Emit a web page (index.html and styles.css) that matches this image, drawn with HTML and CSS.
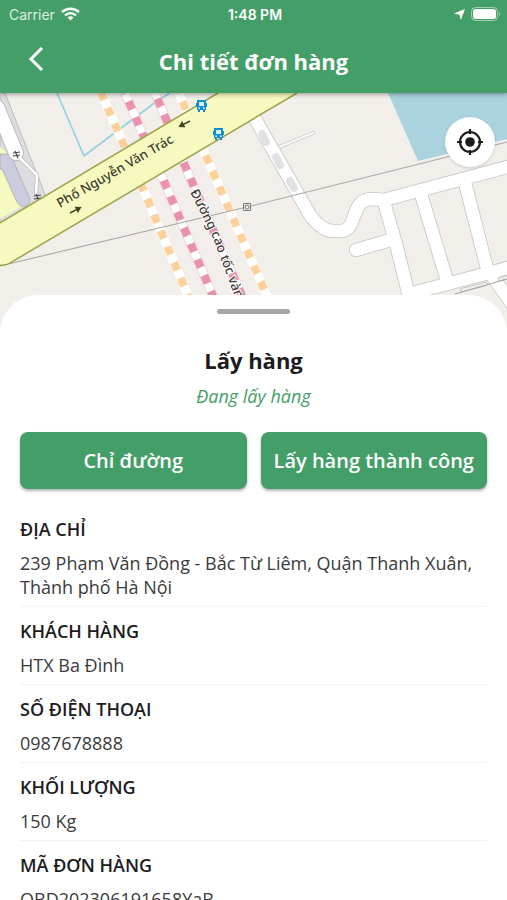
FILE: index.html
```html
<!DOCTYPE html>
<html lang="vi">
<head>
    <meta charset="UTF-8">
    <meta name="viewport" content="width=device-width, initial-scale=1.0">
    <title>Chi tiết đơn hàng</title>
    <link rel="stylesheet" href="styles.css">
</head>
<body>
    <!-- HEADER -->
    <header class="header">
        <div class="status-bar">
            <div class="status-left">
                <span>Carrier</span>
                <svg width="19" height="14" viewBox="0 0 19 14" fill="none" stroke="#fff" stroke-width="2.4">
                    <path d="M1 5.2C6 .6 13 .6 18 5.2"/>
                    <path d="M4 8.4c3.300-3 7.700-3 11 0"/>
                    <path d="M9.500 13.500 6.500 10.500c1.800-1.600 4.200-1.600 6 0z" fill="#fff" stroke="none"/>
                </svg>
            </div>
            <span class="status-time">1:48 PM</span>
            <div class="status-right">
                <svg width="11" height="11" viewBox="0 0 11 11" fill="#fff">
                    <path d="M11 0 6.800 11 5.400 5.800 0 4.600z"/>
                </svg>
                <svg width="30" height="14" viewBox="0 0 30 14">
                    <rect x=".5" y=".5" width="26" height="13" rx="4" fill="none" stroke="#fff" stroke-opacity=".5"/>
                    <rect x="2" y="2" width="23" height="10" rx="2.500" fill="#fff"/>
                    <path d="M28 5c1.600.5 1.600 3.500 0 4z" fill="#fff" fill-opacity=".5"/>
                </svg>
            </div>
        </div>
        <div class="nav-bar">
            <button class="back" type="button" aria-label="Quay lại">
                <svg width="16" height="26" viewBox="0 0 16 26" fill="none" stroke="#fff" stroke-width="3">
                    <path d="M14 2 3 13l11 11"/>
                </svg>
            </button>
            <h1 class="title">Chi tiết đơn hàng</h1>
        </div>
    </header>

    <!-- MAP -->
    <section class="map">
        <svg class="map-canvas" viewBox="0 93 507 240" preserveAspectRatio="xMidYMin slice">
            <defs>
                <g id="bus">
                    <path d="M1 0h9v3h1v4h-1v3H9v2H7v-2H4v2H2v-2H1V7H0V3h1z" fill="#0f8fd0"/>
                    <path d="M3 2h5v4H3z" fill="#d8f0f4"/>
                    <path d="M2.500 7.500h1.500V9H2.500zM7 7.500h1.500V9H7z" fill="#fff"/>
                </g>
                <g id="arrow">
                    <path d="M0 0h9" stroke="#3f4420" stroke-width="1.500"/>
                    <path d="M7-3.500 13 0 7 3.500z" fill="#3f4420"/>
                </g>
                <g id="roads">
                    <path d="m254 117 56 98q12 16 23 16h8q8 0 12-12c4-13 8-20 19-20l12 1 127-34"/>
                    <path d="m384 202 12 42 15 60m-55-54 38-11"/>
                    <path d="m421 194 27 90m16-105 24 93m-79 22 102-27"/>
                    <path d="m492 276 36 50"/>
                </g>
                <path id="highway" d="M190 192 213 238 236 300 250 333"/>
            </defs>
            <rect y="93" width="507" height="240" fill="#f2efea"/>

            <!-- water -->
            <path d="M388 93h119v46l-89 22z" fill="#aad3df"/>
            <path d="M57 93 84 156 157 101 170 93" fill="none" stroke="#8fd0e6" stroke-width="1.600"/>

            <!-- left block -->
            <path d="M0 93h5l41 104-46 27z" fill="#dddddf" stroke="#bbb"/>
            <path d="M0 147 7 153 22 206 0 219z" fill="#f6f9c0"/>
            <path d="M0 154h7q4 0 5 4l17 39c4 9-8 13-12 5L2 169H0z" fill="#ccccdf" stroke="#aaa" stroke-width=".8"/>
            <path d="m20 158 17 17-1 22" fill="none" stroke="#bbb" stroke-width="4"/>
            <path d="M-3 107 16 153" fill="none" stroke="#bbb" stroke-width="16" stroke-linecap="round"/>
            <path d="M-3 107 16 153" fill="none" stroke="#fff" stroke-width="14" stroke-linecap="round"/>
            <path d="m20 158 17 17-1 22" fill="none" stroke="#fff" stroke-width="2.500"/>
            <path d="m13 153 7-1m-7 4 7-1m-5-4 3 7M34 196l7-1m-7 4 7-1m-5-4 3 7" stroke="#444" stroke-width="1.200"/>

            <!-- side roads -->
            <g fill="none" stroke-linejoin="round" stroke-linecap="round">
                <path d="m279 147 34-14" stroke="#c8c8c8" stroke-width="4"/>
                <path d="m279 147 34-14" stroke="#fafafa" stroke-width="2.400"/>
                <use href="#roads" stroke="#c8c5c2" stroke-width="14"/>
                <use href="#roads" stroke="#fff" stroke-width="12.400"/>
                <path d="m262 134 4 8m10 15 4 8m10 16 4 7" stroke="#e2e2e2" stroke-width="8"/>
                <path d="m462 290 24-6m14-5 8-2" stroke="#bbb" stroke-width="4"/>
                <path d="m462 290 24-6m14-5 8-2" stroke="#f2efea" stroke-width="2.500"/>
            </g>

            <!-- planned roads -->
            <g fill="none" stroke="#fff" stroke-width="9">
                <path d="m101 93 25 57m15 34 51 121"/>
                <path d="m179 93 8 19m15 35 72 165"/>
                <path d="m125 93 22 51m13 28 56 131M155 93l14 33m12 31 65 148" stroke="#f2b9ca"/>
                <path d="m125 93 22 51m13 28 56 131M155 93l14 33m12 31 65 148" stroke-width="8"/>
            </g>
            <g fill="none" stroke-width="8" stroke-dasharray="8.600 8.600">
                <path d="m101 93 25 57m15 34 51 121" stroke="#fdd19b" stroke-dashoffset="1"/>
                <path d="m179 93 8 19m15 35 72 165" stroke="#fdd19b" stroke-dashoffset="8"/>
                <path d="m125 93 22 51m13 28 56 131" stroke="#e892ac" stroke-dashoffset="8"/>
                <path d="m155 93 14 33m12 31 65 148" stroke="#e892ac" stroke-dashoffset="11"/>
            </g>

            <!-- power line -->
            <path d="m0 266 247-59 260-65M455 294l52-15" fill="none" stroke="#a9a7a5" stroke-width="1.100"/>
            <path d="M243.500 203.500h7v7h-7z" fill="#f2efea" stroke="#777"/>
            <circle cx="247" cy="207" r="2" fill="none" stroke="#777"/>

            <!-- main road -->
            <path d="m-2 224 220-131h79L10 263q-4 3-12 2z" fill="#f7fabf"/>
            <path d="m-2 224 220-131M297 93 10 263q-4 3-12 2" fill="none" stroke="#9aa24a" stroke-width="1.500"/>
            <use href="#arrow" transform="translate(70 213) rotate(-27)"/>
            <use href="#arrow" transform="translate(190 121) rotate(153)"/>
            <use href="#bus" x="196" y="100"/>
            <use href="#bus" x="213" y="128"/>

            <text class="street" transform="translate(60 208) rotate(-30)">Phố Nguyễn Văn Trác</text>
            <text class="street street-halo"><textPath href="#highway">Đường cao tốc vành đai</textPath></text>
        </svg>
        <button class="locate" type="button" aria-label="Vị trí của tôi">
            <svg width="28" height="28" viewBox="0 0 28 28" fill="none" stroke="#1c1c1c" stroke-width="2.200">
                <circle cx="14" cy="14" r="10"/>
                <circle cx="14" cy="14" r="4.800" fill="#1c1c1c" stroke="none"/>
                <path d="M14 1v5m0 16v5M1 14h5m16 0h5"/>
            </svg>
        </button>
    </section>

    <!-- ORDER SHEET -->
    <main class="sheet">
        <div class="handle"></div>
        <h2 class="step">Lấy hàng</h2>
        <p class="step-status">Đang lấy hàng</p>
        <div class="actions">
            <button class="btn" type="button">Chỉ đường</button>
            <button class="btn" type="button">Lấy hàng thành công</button>
        </div>
        <dl class="details">
            <div class="row">
                <dt>ĐỊA CHỈ</dt>
                <dd>239 Phạm Văn Đồng - Bắc Từ Liêm, Quận Thanh Xuân, Thành phố Hà Nội</dd>
            </div>
            <div class="row">
                <dt>KHÁCH HÀNG</dt>
                <dd>HTX Ba Đình</dd>
            </div>
            <div class="row">
                <dt>SỐ ĐIỆN THOẠI</dt>
                <dd>0987678888</dd>
            </div>
            <div class="row">
                <dt>KHỐI LƯỢNG</dt>
                <dd>150 Kg</dd>
            </div>
            <div class="row">
                <dt>MÃ ĐƠN HÀNG</dt>
                <dd>OBD202306191658YaB</dd>
            </div>
        </dl>
    </main>
</body>
</html>
```
FILE: styles.css
```css
* {
    box-sizing: border-box;
    margin: 0;
    padding: 0;
}

body {
    display: flex;
    flex-direction: column;
    height: 100vh;
    overflow: hidden;
    background-color: #fff;
    color: #1c1c1e;
    font-family: "Open Sans", "Noto Sans", sans-serif;
}

button {
    border: none;
    font-family: inherit;
    cursor: pointer;
}

svg {
    display: block;
}

/* HEADER */
.header {
    position: relative;
    z-index: 1;
    flex: none;
    background-color: #449e68;
    color: #fff;
    box-shadow: 0 1px 5px rgba(0, 0, 0, 0.4);
}

.status-bar {
    display: grid;
    grid-template-columns: 1fr auto 1fr;
    align-items: center;
    height: 28px;
    padding: 0 6px 0 9px;
    font-family: Inter, sans-serif;
    font-size: 14px;
}

.status-left,
.status-right {
    display: flex;
    align-items: center;
    gap: 6px;
}

.status-left {
    color: #dcefe3;
}

.status-right {
    justify-content: flex-end;
}

.status-time {
    font-weight: 600;
}

.nav-bar {
    display: grid;
    grid-template-columns: 72px 1fr 72px;
    align-items: center;
    height: 65px;
}

.back {
    display: flex;
    justify-content: center;
    padding: 0 0 4px;
    background: none;
}

.title {
    font-size: 22px;
    font-weight: 700;
    line-height: 32px;
    text-align: center;
}

/* MAP */
.map {
    position: relative;
    flex: none;
}

.map-canvas {
    width: 100%;
    height: 240px;
}

.street {
    font-family: "Noto Sans", sans-serif;
    font-size: 13px;
    font-weight: 500;
    fill: #3c3c32;
}

.street-halo {
    stroke: #fff;
    stroke-width: 2px;
    paint-order: stroke;
}

.locate {
    position: absolute;
    top: 24px;
    right: 12px;
    display: flex;
    align-items: center;
    justify-content: center;
    width: 50px;
    height: 50px;
    border-radius: 50%;
    background-color: #fff;
    box-shadow: 0 1px 3px rgba(0, 0, 0, 0.15);
}

/* ORDER SHEET */
.sheet {
    position: relative;
    flex: 1;
    min-height: 0;
    margin-top: -38px;
    padding: 14px 20px 0;
    overflow-y: auto;
    scrollbar-width: none;
    border-radius: 38px 38px 0 0;
    background-color: #fff;
}

.handle {
    width: 73px;
    height: 5px;
    margin: 0 auto 30px;
    border-radius: 3px;
    background-color: #a6a6a6;
}

.step {
    font-size: 22px;
    font-weight: 700;
    line-height: 32px;
    text-align: center;
}

.step-status {
    margin-top: 8px;
    color: #449e68;
    font-size: 18px;
    font-style: italic;
    line-height: 24px;
    text-align: center;
}

.actions {
    display: grid;
    grid-template-columns: 1fr 1fr;
    gap: 14px;
    margin-top: 24px;
}

.btn {
    height: 57px;
    border-radius: 8px;
    background-color: #449e68;
    box-shadow: 0 2px 3px rgba(0, 0, 0, 0.3);
    color: #fff;
    font-size: 20px;
    font-weight: 600;
    white-space: nowrap;
}

/* DETAILS */
.details {
    margin-top: 16px;
}

.row {
    padding: 12px 0 7px;
    border-bottom: 1px solid #f3f3f3;
}

.row dt {
    font-size: 18px;
    font-weight: 600;
    line-height: 24px;
}

.row dd {
    margin-top: 10px;
    color: #3a3a3c;
    font-size: 18px;
    line-height: 24px;
}
```
